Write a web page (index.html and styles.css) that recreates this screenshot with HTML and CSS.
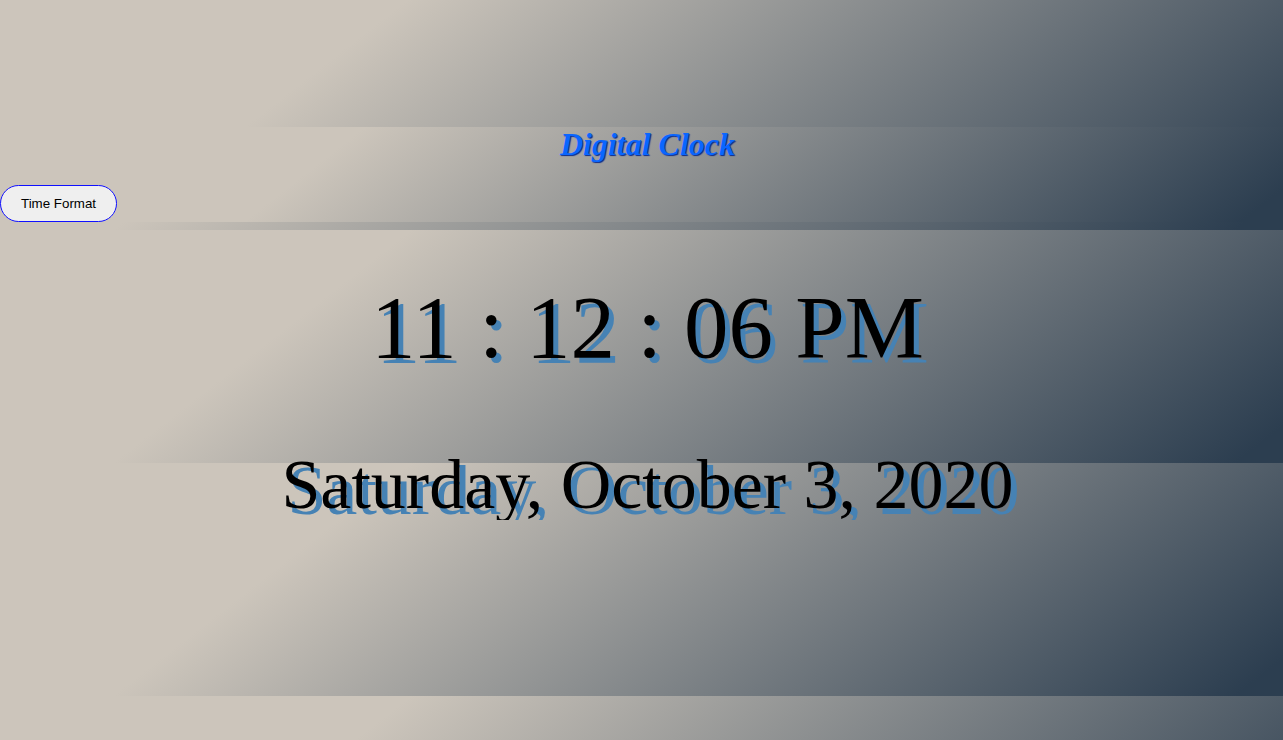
FILE: index.html
```html
<!DOCTYPE html>
<html lang="en">
<head>
<meta charset="utf-8">
<title>Digital Clock</title>
<link rel="stylesheet" href="styles.css">
</head>
<body>
  <header class="top-bar">
    <h1 class="title">Digital Clock</h1>
    <button class="format-btn" type="button">Time Format</button>
  </header>
  <main class="clock">
    <div class="clock-time">11 : 12 : 06 PM</div>
    <div class="clock-date">Saturday, October 3, 2020</div>
  </main>
</body>
</html>
```

FILE: styles.css
```css
html {
  background-image: linear-gradient(142deg, #ccc5bb 26%, #2c3e50 97%);
  background-size: 100% 233px;
  background-position: 0 -3px;
  background-repeat: repeat;
  min-height: 100%;
}

body {
  margin: 0;
  padding-top: 127px;
  font-family: "Liberation Serif", "Times New Roman", serif;
}

.top-bar {
  height: 95px;
  box-sizing: border-box;
  padding-top: 1px;
  background-image: linear-gradient(142deg, #ccc5bb 26%, #2c3e50 97%);
  display: flex;
  flex-direction: column;
  align-items: flex-start;
}

.title {
  align-self: stretch;
  margin: 0;
  padding-left: 12px;
  font-size: 32px;
  line-height: 32px;
  font-style: italic;
  font-weight: bold;
  text-align: center;
  color: #0a66ff;
  text-shadow: 1px 1px 1px #0b2a8c;
}

.format-btn {
  margin-top: 25px;
  height: 37px;
  padding: 0 20px;
  border: 1px solid #1010ff;
  border-radius: 19px;
  background: #efefef;
  color: #000;
  font-family: "Liberation Sans", Arial, sans-serif;
  font-size: 13.33px;
  cursor: pointer;
}

.clock {
  margin-top: 8px;
  padding-top: 53px;
  padding-left: 12px;
  text-align: center;
  color: #000;
}

.clock-time {
  font-size: 89px;
  line-height: 89px;
  text-shadow: 5px 5px 0 steelblue;
}

.clock-date {
  margin-top: 78px;
  font-size: 70px;
  line-height: 70px;
  text-shadow: 6px 6px 0 steelblue;
}
```
